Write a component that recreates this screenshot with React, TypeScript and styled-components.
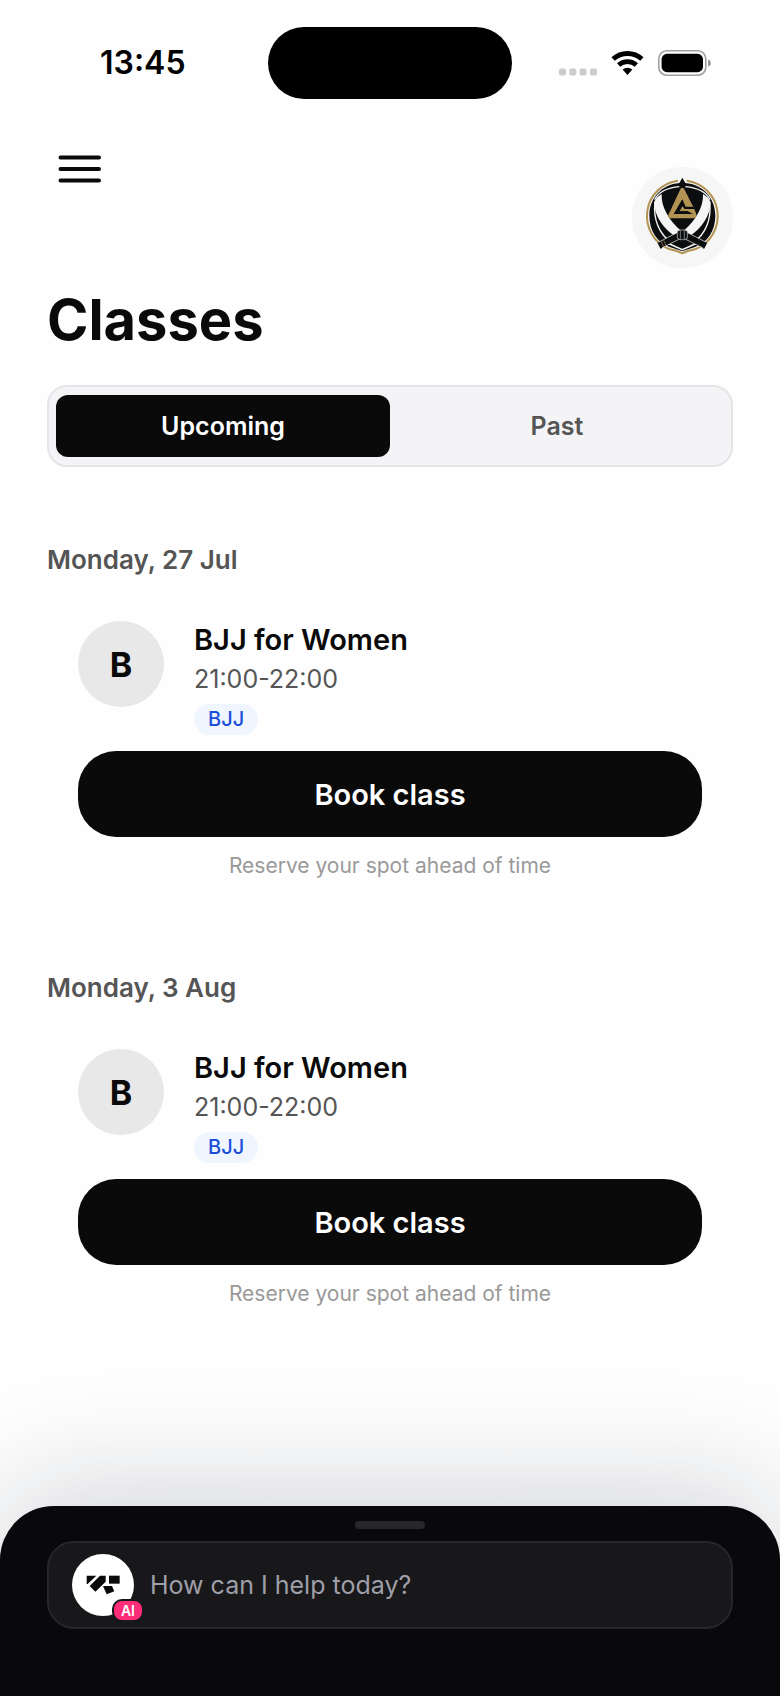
import { FunctionComponent, useState } from 'react';
import styled, { createGlobalStyle } from 'styled-components';

const GlobalStyle = createGlobalStyle`
  * {
    box-sizing: border-box;
  }
  body {
    margin: 0;
    background: #fefefe;
    color: #0a0a0a;
    font-family: Inter, Roboto, sans-serif;
  }
  button, input {
    font-family: inherit;
  }
`

const Page = styled.div`
  display: flex;
  flex-direction: column;
  min-height: 100vh;
  overflow: hidden;
`
const StatusBar = styled.div`
  display: grid;
  grid-template-columns: 1fr 244px 1fr;
  align-items: center;
  padding-top: 27px;
`
const Clock = styled.time`
  padding-left: 100px;
  font-size: 32px;
  font-weight: 600;
  line-height: 40px;
  color: #000;
`
const Island = styled.div`
  height: 72px;
  border-radius: 36px;
  background: #000;
`
const StatusIcons = styled.div`
  display: flex;
  align-items: center;
  justify-content: flex-end;
  gap: 14px;
  padding-right: 69px;
`
const Header = styled.header`
  display: flex;
  align-items: flex-start;
  justify-content: space-between;
  padding: 40px 47px 0;
`
const MenuButton = styled.button`
  display: flex;
  align-items: center;
  justify-content: center;
  width: 66px;
  height: 60px;
  padding: 0;
  border: 0;
  background: none;
`
const ClubLogo = styled.div`
  width: 101px;
  height: 101px;
  margin-top: 28px;
  border-radius: 50%;
  background: #f6f6f6;
`
const Main = styled.main`
  display: flex;
  flex-direction: column;
  padding: 19px 47px 92px;
`
const Title = styled.h1`
  margin: 0;
  font-size: 56px;
  font-weight: 700;
  line-height: 66px;
`
const Tabs = styled.div`
  display: flex;
  margin-top: 32px;
  padding: 8px 7px;
  border: 2px solid #e5e5e8;
  border-radius: 20px;
  background: #f4f4f7;
`
const Tab = styled.button<{ $active: boolean }>`
  flex: 1;
  height: 62px;
  border: 0;
  border-radius: 12px;
  background: ${({ $active }) => ($active ? '#0a0a0a' : 'transparent')};
  color: ${({ $active }) => ($active ? '#fff' : '#555')};
  font-size: 25px;
  font-weight: 600;
`
const Days = styled.div`
  display: flex;
  flex-direction: column;
  gap: 91px;
  margin-top: 76px;
`
const DayTitle = styled.h2`
  margin: 0;
  font-size: 26px;
  font-weight: 600;
  line-height: 34px;
  color: #555;
`
const Card = styled.article`
  display: flex;
  flex-direction: column;
  padding: 44px 31px 0;
`
const ClassRow = styled.div`
  display: flex;
  align-items: flex-start;
  gap: 30px;
`
const Initial = styled.div`
  display: flex;
  align-items: center;
  justify-content: center;
  width: 86px;
  height: 86px;
  border-radius: 50%;
  background: #e8e8e8;
  font-size: 34px;
  font-weight: 700;
`
const Info = styled.div`
  display: flex;
  flex-direction: column;
  align-items: flex-start;
`
const ClassName = styled.h3`
  margin: 0;
  font-size: 29px;
  font-weight: 600;
  line-height: 38px;
`
const Hours = styled.span`
  font-size: 25px;
  line-height: 40px;
  color: #555;
`
const Tag = styled.span`
  margin-top: 5px;
  padding: 0 14px;
  border-radius: 16px;
  background: #eff6ff;
  color: #1d4ed8;
  font-size: 20px;
  font-weight: 500;
  line-height: 31px;
`
const BookButton = styled.button`
  height: 86px;
  margin-top: 16px;
  border: 0;
  border-radius: 38px;
  background: #0a0a0a;
  color: #fff;
  font-size: 29px;
  font-weight: 600;
`
const Note = styled.p`
  margin: 15px 0 0;
  font-size: 21px;
  line-height: 28px;
  text-align: center;
  color: #999;
`
const Sheet = styled.footer`
  display: flex;
  flex-direction: column;
  align-items: center;
  gap: 12px;
  margin-top: auto;
  padding: 15px 47px 67px;
  border-radius: 54px 54px 0 0;
  background: #09090b;
  box-shadow: 0 -16px 120px rgba(15, 23, 42, 0.18);
`
const Handle = styled.div`
  width: 70px;
  height: 8px;
  border-radius: 4px;
  background: #27272a;
`
const AskBox = styled.label`
  display: flex;
  align-items: center;
  gap: 16px;
  width: 100%;
  height: 88px;
  padding: 0 23px;
  border: 2px solid #27272a;
  border-radius: 27px;
  background: #18181a;
`
const Assistant = styled.span`
  position: relative;
  display: flex;
  width: 62px;
  height: 62px;
  border-radius: 50%;
  background: #fff;
`
const AiBadge = styled.span`
  position: absolute;
  right: -10px;
  bottom: -6px;
  padding: 0 7px;
  border: 2px solid #18181a;
  border-radius: 10px;
  background: #ff2d78;
  color: #fff;
  font-size: 14px;
  font-weight: 600;
  line-height: 19px;
`
const AskInput = styled.input`
  flex: 1;
  min-width: 0;
  padding: 0;
  border: 0;
  outline: 0;
  background: none;
  color: #fff;
  font-size: 25px;
  line-height: 32px;

  &::placeholder {
    color: #9f9fa9;
    opacity: 1;
  }
`

const SignalIcon = () => (
  <svg width="38" height="26" viewBox="0 0 38 26" fill="#ccc">
    <rect x="0" y="18.5" width="7" height="7" rx="2" />
    <rect x="10.3" y="18.5" width="7" height="7" rx="2" />
    <rect x="20.6" y="18.5" width="7" height="7" rx="2" />
    <rect x="31" y="18.5" width="7" height="7" rx="2" />
  </svg>
)

const WifiIcon = () => (
  <svg width="33" height="24" viewBox="0 0 32 24" fill="none" stroke="#000">
    <path d="M1.6 8A21.5 21.5 0 0 1 30.4 8" strokeWidth="4.9" />
    <path d="M7.1 14.1A13.3 13.3 0 0 1 24.9 14.1" strokeWidth="4.7" />
    <path d="M16 24L11.1 18.6A7.3 7.3 0 0 1 20.9 18.6Z" fill="#000" stroke="none" />
  </svg>
)

const BatteryIcon = () => (
  <svg width="53" height="26" viewBox="0 0 53 26">
    <rect x="0.8" y="0.8" width="47" height="24.4" rx="8" fill="none" stroke="#a0a0a0" strokeWidth="1.6" />
    <rect x="3.6" y="3.8" width="41.4" height="18.4" rx="5.4" fill="#000" />
    <path d="M50.2 9.4C53.6 10.4 53.6 15.6 50.2 16.6Z" fill="#8e8e8e" />
  </svg>
)

const MenuIcon = () => (
  <svg width="44" height="30" viewBox="0 0 44 30" stroke="#0a0a0a" strokeWidth="4" strokeLinecap="round">
    <path d="M2.5 3.4H41M2.5 15H41M2.5 26.6H41" />
  </svg>
)

const ClubEmblem = () => (
  <svg width="101" height="101" viewBox="39 20 303 303">
    {/* outer ring */}
    <path d="M177 61A107 107 0 0 0 150 266Q172 270 190 279Q208 270 230 266A107 107 0 0 0 203 61" fill="none" stroke="#b39354" strokeWidth="6" />
    <path d="M190 52L199 68C252 72 289 114 289 166C289 210 266 246 228 260L190 273L152 260C114 246 91 210 91 166C91 114 128 72 181 68Z" fill="#0b0d0f" />
    {/* thin arcs round the blades */}
    <path d="M108 126C102 176 120 222 158 247M272 126C278 176 260 222 222 247" fill="none" stroke="#f4f4f4" strokeWidth="4" />
    <path d="M107 118Q124 84 181 79M273 118Q256 84 199 79" fill="none" stroke="#f4f4f4" strokeWidth="4" />
    <path d="M150 250L190 268L230 250" fill="none" stroke="#f4f4f4" strokeWidth="5" />
    {/* blades */}
    <path d="M128 101C126 140 150 180 186 211L168 227C132 206 106 165 105 126Q112 110 128 101Z" fill="#f5f5f5" />
    <path d="M252 101C254 140 230 180 194 211L212 227C248 206 274 165 275 126Q268 110 252 101Z" fill="#f5f5f5" />
    {/* handles */}
    <path d="M180 214L118 246L126 264L186 234ZM200 214L262 246L254 264L194 234Z" fill="#0b0d0f" stroke="#f4f4f4" strokeWidth="2" />
    <path d="M118 246L127 264M262 246L253 264" stroke="#0b0d0f" strokeWidth="6" />
    <path d="M127 244L134 259M134 240L141 256" stroke="#b39354" strokeWidth="3" strokeDasharray="4 2" />
    <path d="M175 213L183 209H197L205 213V234L197 238H183L175 234Z" fill="#0b0d0f" stroke="#ccc" strokeWidth="2" />
    <path d="M184 210V237M196 210V237" stroke="#aaa" strokeWidth="2" />
    {/* triangle */}
    <path d="M190 82Q194 82 196 87L224 142H199L190 118L165 161H232Q234 174 224 174H154Q145 174 148 164L184 87Q186 82 190 82Z" fill="#b39354" />
    <path d="M190 137L197 146H226L232 162H222L206 153H181Z" fill="#b39354" />
    <path d="M190 117L164 161H220L206 153H181L190 137L197 143H224L222 139H200Z" fill="#0b0d0f" />
  </svg>
)

const AssistantLogo = () => (
  <svg width="62" height="62" viewBox="216 223 186 186" fill="#0a0a0a">
    <path d="M260 288H289L263 313H260Z" />
    <path d="M300 288H317V306L286 336L269 319Z" />
    <path d="M327 288H359V312H327Z" />
    <path d="M309 319H336L343 335L320 344Z" />
  </svg>
)

const days = ['Monday, 27 Jul', 'Monday, 3 Aug'];

const App: FunctionComponent = () => {
  const [tab, setTab] = useState('Upcoming');

  return (
    <Page>
      <GlobalStyle />
      <StatusBar>
        <Clock>13:45</Clock>
        <Island />
        <StatusIcons>
          <SignalIcon />
          <WifiIcon />
          <BatteryIcon />
        </StatusIcons>
      </StatusBar>

      <Header>
        <MenuButton aria-label="Menu">
          <MenuIcon />
        </MenuButton>
        <ClubLogo>
          <ClubEmblem />
        </ClubLogo>
      </Header>

      <Main>
        <Title>Classes</Title>
        <Tabs>
          {['Upcoming', 'Past'].map((name) => (
            <Tab key={name} $active={tab === name} aria-pressed={tab === name} onClick={() => setTab(name)}>
              {name}
            </Tab>
          ))}
        </Tabs>

        <Days>
          {days.map((day) => (
            <section key={day}>
              <DayTitle>{day}</DayTitle>
              <Card>
                <ClassRow>
                  <Initial>B</Initial>
                  <Info>
                    <ClassName>BJJ for Women</ClassName>
                    <Hours>21:00-22:00</Hours>
                    <Tag>BJJ</Tag>
                  </Info>
                </ClassRow>
                <BookButton>Book class</BookButton>
                <Note>Reserve your spot ahead of time</Note>
              </Card>
            </section>
          ))}
        </Days>
      </Main>

      <Sheet>
        <Handle />
        <AskBox>
          <Assistant>
            <AssistantLogo />
            <AiBadge>AI</AiBadge>
          </Assistant>
          <AskInput type="text" aria-label="Ask the assistant" placeholder="How can I help today?" />
        </AskBox>
      </Sheet>
    </Page>
  );
};

export default App;
